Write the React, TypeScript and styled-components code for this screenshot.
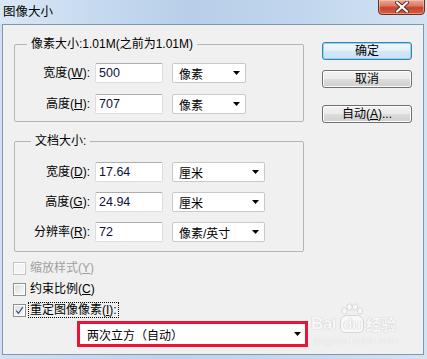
import React from "react";
import styled, { createGlobalStyle } from "styled-components";

const Global = createGlobalStyle`
  html, body { margin: 0; padding: 0; background: #fff; }
  body {
    font-family: "Liberation Sans", "Noto Sans CJK SC", sans-serif;
    font-size: 12px;
    color: #000;
  }
  * { box-sizing: border-box; }
`;

const Window = styled.div`
  width: 427px;
  height: 359px;
  display: flex;
  flex-direction: column;
  overflow: hidden;
  background: linear-gradient(to right, #cfe0f2 0%, #bcd3eb 40%, #c6daef 75%, #d3e3f3 100%);
`;

const TitleBar = styled.div`
  height: 24px;
  flex-shrink: 0;
  display: flex;
  align-items: flex-start;
  justify-content: space-between;
  padding: 0 2px 0 3px;
  background: linear-gradient(to right, #dae7f5 0%, #c6daef 22%, #b7cfe9 45%, #c1d6ed 70%, #d3e3f3 100%);
`;

const Title = styled.div`
  font-family: "Noto Sans CJK SC", sans-serif;
  font-size: 12.5px;
  line-height: 16px;
  margin-top: 3px;
  color: #000;
`;

const CloseButton = styled.div`
  width: 47px;
  height: 16px;
  margin-top: -1px;
  border: 1px solid #6e2c22;
  border-radius: 0 0 4px 4px;
  background: linear-gradient(#eaa899 0%, #dc7b66 40%, #c7452d 55%, #d0603f 100%);
  box-shadow: inset 0 0 0 1px rgba(255, 220, 200, 0.45);
  display: flex;
  align-items: center;
  justify-content: center;
`;

const Client = styled.div`
  flex: 1;
  margin: 0 3px 4px 2px;
  border: 1px solid #8396ad;
  background: #f0f0f0;
  display: flex;
  gap: 18px;
  padding: 11px 11px 0 11px;
  position: relative;
`;

const LeftColumn = styled.div`
  width: 290px;
  display: flex;
  flex-direction: column;
`;

const Group = styled.fieldset<{ $pt: number; $pb: number; $mt?: number }>`
  margin: ${(p) => p.$mt ?? 0}px 0 0 0;
  border: 1px solid #b5b5b5;
  border-radius: 2px;
  padding: ${(p) => p.$pt}px 0 ${(p) => p.$pb}px 0;
  min-width: 0;
`;

const Legend = styled.legend<{ $ml: number }>`
  margin-left: ${(p) => p.$ml}px;
  padding: 0 4px;
  line-height: 16px;
  height: 16px;
  font-size: 12px;
`;

const Rows = styled.div<{ $gap: number }>`
  display: flex;
  flex-direction: column;
  gap: ${(p) => p.$gap}px;
`;

const Row = styled.div`
  display: flex;
  align-items: center;
  height: 20px;
`;

const FieldLabel = styled.label`
  width: 75px;
  margin-right: 5px;
  text-align: right;
  white-space: nowrap;
  line-height: 16px;
`;

const TextBox = styled.div`
  width: 68px;
  height: 20px;
  background: #fff;
  border: 1px solid #d9dee5;
  border-top-color: #abadb3;
  border-radius: 2px;
  padding-left: 3px;
  display: flex;
  align-items: center;
  margin-right: 9px;
  font-size: 12.5px;
  color: #10103a;
`;

const Combo = styled.div<{ $w: number }>`
  width: ${(p) => p.$w}px;
  height: 20px;
  background: #fff;
  border: 1px solid #c9c9c9;
  border-radius: 2px;
  display: flex;
  align-items: center;
  justify-content: space-between;
  padding: 0 5px 0 6px;
`;

const Arrow = () => (
  <svg width="7" height="4" viewBox="0 0 7 4">
    <polygon points="0,0 7,0 3.5,4" fill="#000" />
  </svg>
);

const ChecksBlock = styled.div`
  margin-top: 8px;
  display: flex;
  flex-direction: column;
  gap: 5px;
`;

const CheckRow = styled.div<{ $disabled?: boolean }>`
  display: flex;
  align-items: center;
  height: 16px;
  gap: 3px;
  margin-left: -1px;
  color: ${(p) => (p.$disabled ? "#a0a0a0" : "#000")};
`;

const Box = styled.span<{ $disabled?: boolean }>`
  width: 13px;
  height: 13px;
  border: 1px solid ${(p) => (p.$disabled ? "#c4c4c4" : "#8e8f8f")};
  background: ${(p) =>
    p.$disabled ? "#f4f4f4" : "linear-gradient(135deg, #dcdcdc 0%, #f0f0f0 60%, #fbfbfb 100%)"};
  box-shadow: inset 0 0 0 1px #fff;
  display: flex;
  align-items: center;
  justify-content: center;
`;

const CheckText = styled.span<{ $focus?: boolean }>`
  line-height: 14px;
  padding: 0 1px;
  outline: ${(p) => (p.$focus ? "1px dotted #000" : "none")};
`;

const HighlightCombo = styled.div`
  margin: 3px 0 0 63px;
  width: 231px;
  height: 26px;
  border: 3px solid #ee1233;
  background: #fff;
  display: flex;
  align-items: center;
  justify-content: space-between;
  padding: 0 4px 0 7px;
  font-family: "Noto Sans CJK SC", sans-serif;
`;

const ButtonColumn = styled.div`
  width: 90px;
  display: flex;
  flex-direction: column;
  padding-top: 6px;
`;

const Button = styled.div<{ $default?: boolean; $mt?: number }>`
  height: 18px;
  margin-top: ${(p) => p.$mt ?? 0}px;
  border: 1px solid ${(p) => (p.$default ? "#3c7fb1" : "#707070")};
  border-radius: 3px;
  background: ${(p) =>
    p.$default
      ? "linear-gradient(#eef6fc 0%, #e3f0fa 50%, #d3e8f7 51%, #c9e2f5 100%)"
      : "linear-gradient(#f2f2f2 0%, #ebebeb 50%, #dddddd 51%, #cfcfcf 100%)"};
  box-shadow: ${(p) => (p.$default ? "inset 0 0 0 1px #8fd6f5" : "inset 0 0 0 1px #fcfcfc")};
  display: flex;
  align-items: center;
  justify-content: center;
  line-height: 16px;
`;

const Watermark = styled.div`
  position: absolute;
  left: 308px;
  top: 278px;
  display: flex;
  flex-direction: column;
  align-items: flex-start;
  pointer-events: none;
`;

const WmTop = styled.div`
  display: flex;
  align-items: flex-end;
  font-family: "Liberation Sans", "Noto Sans CJK SC", sans-serif;
  font-weight: bold;
  color: #f8f8f8;
  text-shadow: 0 0 1px #c8c8c8, 0 0 1px #cccccc;
`;

const WmWord = styled.span`
  font-size: 17px;
  line-height: 18px;
  letter-spacing: -0.5px;
`;

const WmPaw = styled.span`
  position: relative;
  display: flex;
  flex-direction: column;
  align-items: center;
  margin: 0 2px 0 4px;
`;

const WmPad = styled.span`
  font-size: 15px;
  line-height: 15px;
  padding: 0 2px 1px;
  border: 1px solid #d6d6d6;
  border-radius: 7px 7px 5px 5px;
  background: #f8f8f8;
  letter-spacing: -0.5px;
`;

const WmCn = styled.span`
  font-family: "Noto Sans CJK SC", sans-serif;
  font-size: 15px;
  line-height: 18px;
`;

const WmSub = styled.div`
  margin-top: 2px;
  margin-left: 3px;
  font-size: 10.5px;
  line-height: 11px;
  color: #f8f8f8;
  text-shadow: 0 0 1px #c8c8c8;
`;

const XIcon = () => (
  <svg width="14" height="12" viewBox="0 0 14 12">
    <path d="M2 1.5 L12 10.5 M12 1.5 L2 10.5" stroke="#5a2a22" strokeWidth="4" strokeLinecap="round" />
    <path d="M2 1.5 L12 10.5 M12 1.5 L2 10.5" stroke="#ffffff" strokeWidth="2.2" strokeLinecap="round" />
  </svg>
);

const Check = () => (
  <svg width="9" height="9" viewBox="0 0 9 9">
    <path d="M1.2 4.6 L3.5 7.3 L7.8 1.2" stroke="#3d5585" strokeWidth="1.3" fill="none" />
  </svg>
);

export default function App() {
  return (
    <>
      <Global />
      <Window>
        <TitleBar>
          <Title>图像大小</Title>
          <CloseButton>
            <XIcon />
          </CloseButton>
        </TitleBar>
        <Client>
          <LeftColumn>
            <Group $pt={11} $pb={7}>
              <Legend $ml={12}>像素大小:1.01M(之前为1.01M)</Legend>
              <Rows $gap={11}>
                <Row>
                  <FieldLabel>
                    宽度(<u>W</u>):
                  </FieldLabel>
                  <TextBox>500</TextBox>
                  <Combo $w={74}>
                    <span>像素</span>
                    <Arrow />
                  </Combo>
                </Row>
                <Row>
                  <FieldLabel>
                    高度(<u>H</u>):
                  </FieldLabel>
                  <TextBox>707</TextBox>
                  <Combo $w={74}>
                    <span>像素</span>
                    <Arrow />
                  </Combo>
                </Row>
              </Rows>
            </Group>
            <Group $pt={13} $pb={9} $mt={11}>
              <Legend $ml={16}>文档大小:</Legend>
              <Rows $gap={10}>
                <Row>
                  <FieldLabel>
                    宽度(<u>D</u>):
                  </FieldLabel>
                  <TextBox>17.64</TextBox>
                  <Combo $w={93}>
                    <span>厘米</span>
                    <Arrow />
                  </Combo>
                </Row>
                <Row>
                  <FieldLabel>
                    高度(<u>G</u>):
                  </FieldLabel>
                  <TextBox>24.94</TextBox>
                  <Combo $w={93}>
                    <span>厘米</span>
                    <Arrow />
                  </Combo>
                </Row>
                <Row>
                  <FieldLabel>
                    分辨率(<u>R</u>):
                  </FieldLabel>
                  <TextBox>72</TextBox>
                  <Combo $w={93}>
                    <span>像素/英寸</span>
                    <Arrow />
                  </Combo>
                </Row>
              </Rows>
            </Group>
            <ChecksBlock>
              <CheckRow $disabled>
                <Box $disabled />
                <CheckText>
                  缩放样式(<u>Y</u>)
                </CheckText>
              </CheckRow>
              <CheckRow>
                <Box />
                <CheckText>
                  约束比例(<u>C</u>)
                </CheckText>
              </CheckRow>
              <CheckRow>
                <Box>
                  <Check />
                </Box>
                <CheckText $focus>
                  重定图像像素(<u>I</u>):
                </CheckText>
              </CheckRow>
            </ChecksBlock>
            <HighlightCombo>
              <span>两次立方（自动）</span>
              <Arrow />
            </HighlightCombo>
          </LeftColumn>
          <ButtonColumn>
            <Button $default>确定</Button>
            <Button $mt={10}>取消</Button>
            <Button $mt={17}>
              自动(<u>A</u>)...
            </Button>
          </ButtonColumn>
          <Watermark>
            <WmTop>
              <WmWord>Bai</WmWord>
              <WmPaw>
                <svg width="24" height="12" viewBox="0 0 24 12">
                  <g fill="#f8f8f8" stroke="#d2d2d2" strokeWidth="0.8">
                    <ellipse cx="4.5" cy="8" rx="2.6" ry="3.2" />
                    <ellipse cx="9.5" cy="4" rx="2.6" ry="3.2" />
                    <ellipse cx="15" cy="4" rx="2.6" ry="3.2" />
                    <ellipse cx="20" cy="8" rx="2.6" ry="3.2" />
                  </g>
                </svg>
                <WmPad>du</WmPad>
              </WmPaw>
              <WmCn>经验</WmCn>
            </WmTop>
            <WmSub>jingyan.baidu.com</WmSub>
          </Watermark>
        </Client>
      </Window>
    </>
  );
}
